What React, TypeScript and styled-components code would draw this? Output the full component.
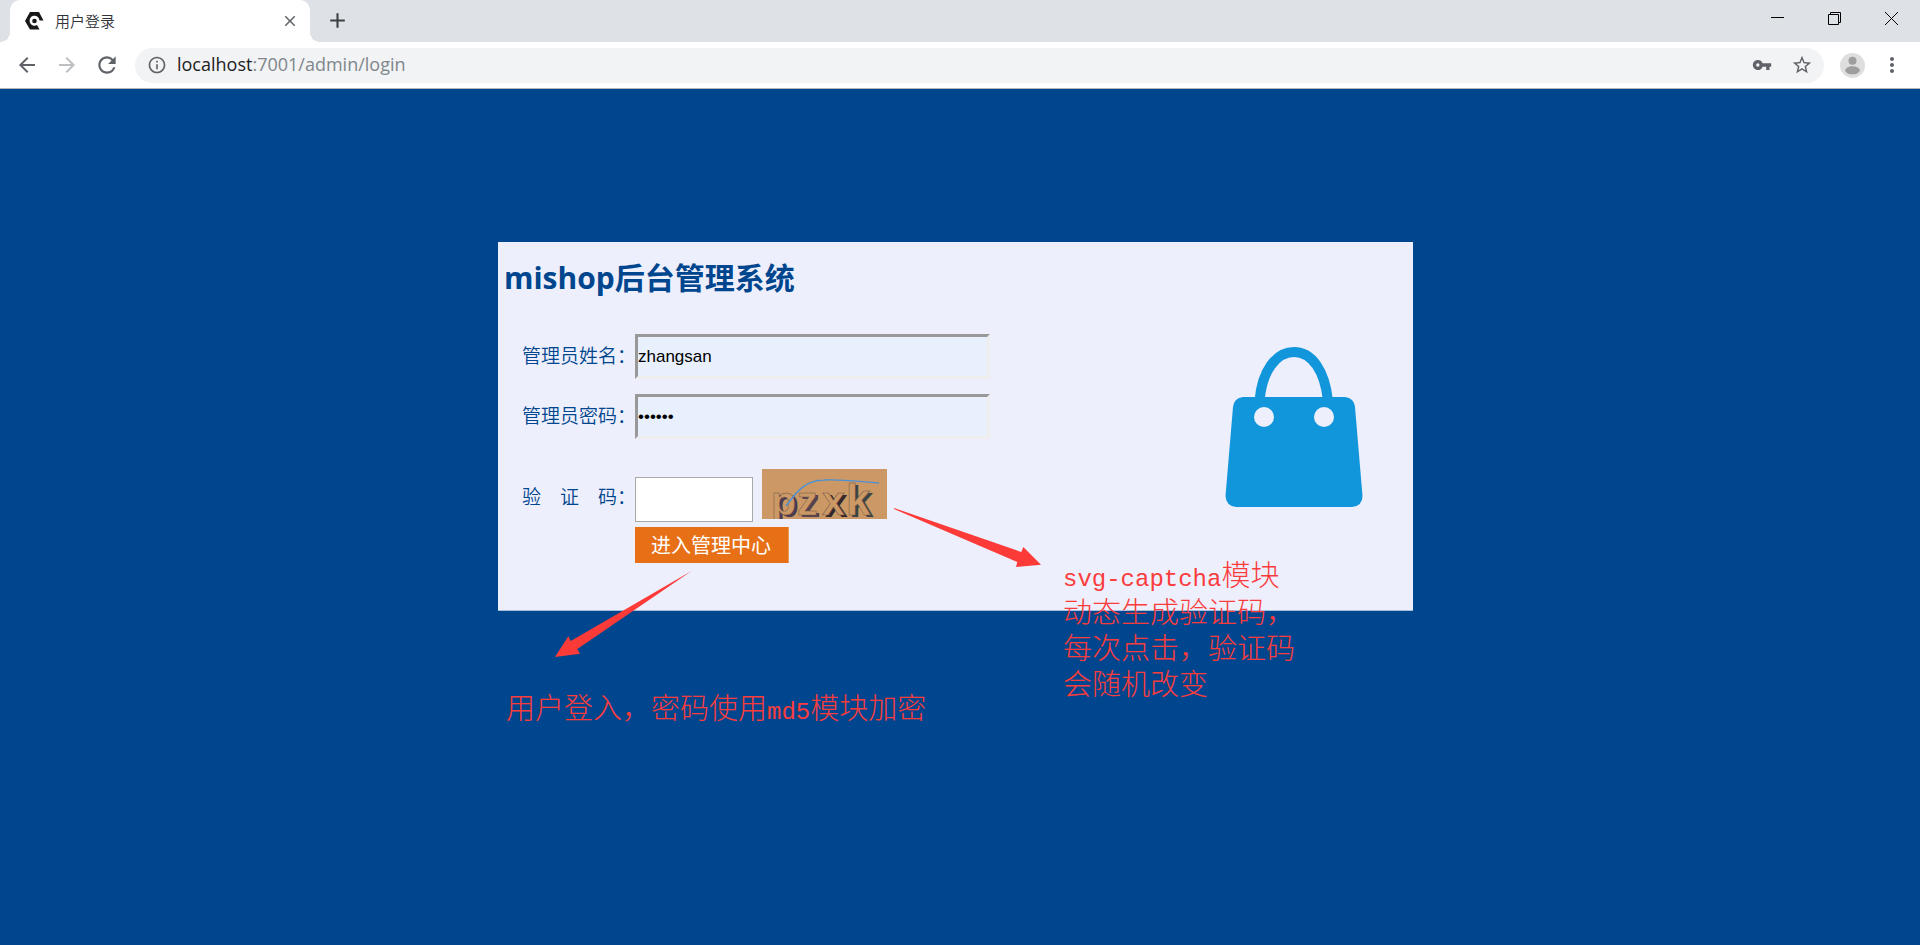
import React, { useState } from "react";
import styled, { createGlobalStyle } from "styled-components";
import {
  MdAdd,
  MdArrowBack,
  MdArrowForward,
  MdClose,
  MdInfoOutline,
  MdMoreVert,
  MdRefresh,
  MdStarBorder,
  MdVpnKey,
} from "react-icons/md";

const GlobalStyle = createGlobalStyle`
  * { box-sizing: border-box; }
  body {
    margin: 0;
    font-family: "Open Sans", "Noto Sans CJK SC", sans-serif;
  }
  button { font-family: inherit; }
`;

const Shell = styled.div`
  display: flex;
  flex-direction: column;
  min-height: 100vh;
`;

/* ---------- browser frame ---------- */

const TabStrip = styled.header`
  display: flex;
  height: 42px;
  padding-left: 10px;
  background: #dee1e6;
`;

const Tab = styled.div`
  position: relative;
  display: flex;
  align-items: center;
  width: 300px;
  padding: 0 11px 0 15px;
  border-radius: 10px 10px 0 0;
  background: #fff;

  &::before,
  &::after {
    content: "";
    position: absolute;
    bottom: 0;
    width: 10px;
    height: 10px;
  }
  &::before {
    left: -10px;
    background: radial-gradient(circle at 0 0, #dee1e6 10px, #fff 10px);
  }
  &::after {
    right: -10px;
    background: radial-gradient(circle at 100% 0, #dee1e6 10px, #fff 10px);
  }
`;

const TabTitle = styled.span`
  flex: 1;
  margin-left: 11px;
  color: #303438;
  font-family: "Noto Sans CJK SC", sans-serif;
  font-size: 15px;
  font-weight: 350;
  line-height: 20px;
`;

const IconButton = styled.button<{ $size?: number; $tone?: string }>`
  display: flex;
  align-items: center;
  justify-content: center;
  flex: none;
  width: ${(p) => p.$size ?? 40}px;
  height: ${(p) => p.$size ?? 40}px;
  padding: 0;
  border: 0;
  background: none;
  color: ${(p) => p.$tone ?? "#5f6368"};
`;

const NewTab = styled(IconButton)`
  margin-left: 7px;
`;

const WindowControls = styled.div`
  display: flex;
  margin-left: auto;
`;

const WindowButton = styled(IconButton)`
  width: 57px;
  height: 37px;
`;

const Toolbar = styled.nav`
  display: flex;
  align-items: center;
  height: 47px;
  padding: 0 8px 0 7px;
  border-bottom: 1px solid #b6b4b6;
  background: #fff;
`;

const AddressBar = styled.div`
  display: flex;
  flex: 1;
  align-items: center;
  height: 35px;
  margin: 0 8px;
  padding: 0 2px 0 12px;
  border-radius: 18px;
  background: #f1f3f4;
  color: #5f6368;
`;

const Address = styled.a`
  flex: 1;
  margin-left: 10px;
  padding-bottom: 2px;
  color: #80868b;
  font-size: 18px;
  line-height: 24px;
  text-decoration: none;
`;

const Host = styled.span`
  color: #202124;
`;

/* ---------- login page ---------- */

const Page = styled.main`
  flex: 1;
  padding: 153px 9px 40px 0;
  background: #00468e;
`;

const Card = styled.section`
  position: relative;
  display: flex;
  justify-content: space-between;
  width: 100%;
  max-width: 915px;
  margin: 0 auto;
  padding: 14px 50px 47px 6px;
  border-bottom: 1px solid #a8bcdb;
  background: #edeffc;
`;

const Title = styled.h1`
  margin: 0 0 34px;
  color: #00468e;
  font-size: 30px;
  font-weight: 700;
  line-height: 44px;
`;

const LoginForm = styled.form`
  display: flex;
  flex-direction: column;
  gap: 15px;
  padding-left: 18px;
`;

const Row = styled.div`
  display: flex;
  align-items: center;
`;

const Label = styled.label`
  flex: none;
  width: 113px;
  padding-bottom: 4px;
  color: #00468e;
  font-family: "Noto Sans CJK SC", sans-serif;
  font-size: 19px;
  font-weight: 350;
  line-height: 28px;
  white-space: nowrap;
`;

const CodeRow = styled(Row)`
  margin-top: 23px;

  ${Label} {
    padding-bottom: 8px;
  }
`;

const Field = styled.input`
  width: 355px;
  height: 45px;
  padding: 0;
  border: 3px solid;
  border-color: #999 #eee #eee #999;
  background: #e8f0fe;
  color: #000;
  font-family: "Liberation Sans", Arial, sans-serif;
  font-size: 17px;
  outline: none;
`;

const CodeField = styled(Field)`
  width: 118px;
  border: 1px solid #a9a9a9;
  background: #fff;
`;

const CaptchaButton = styled.button`
  height: 50px;
  margin: -8px 0 3px 9px;
  padding: 0;
  border: 0;
  background: #cc9966;
`;

const Submit = styled.button`
  width: 154px;
  height: 36px;
  margin: -10px 0 0 113px;
  padding: 0 1px 0 0;
  border: 0;
  border-right: 1px solid #ee9a55;
  background: #e77017;
  color: #fff;
  font-family: "Noto Sans CJK SC", sans-serif;
  font-size: 20px;
  line-height: 36px;
`;

const Bag = styled.svg`
  flex: none;
  width: 138px;
  height: 160px;
  margin-top: 91px;
`;

/* Red remarks pinned over the card */
const Arrow = styled.svg<{ $x: number; $y: number }>`
  position: absolute;
  left: ${(p) => p.$x}px;
  top: ${(p) => p.$y}px;
  fill: #fc3a38;
  pointer-events: none;
`;

const Note = styled.p<{ $x: number; $y: number }>`
  position: absolute;
  left: ${(p) => p.$x}px;
  top: ${(p) => p.$y}px;
  margin: 0;
  color: #fa3c3c;
  font-family: "Noto Sans CJK SC", sans-serif;
  font-size: 29px;
  font-weight: 300;
  line-height: 36px;
  white-space: nowrap;
`;

const Mono = styled.span`
  font-family: "Liberation Mono", monospace;
  font-size: 24px;
  font-weight: 400;
  line-height: 24px;
`;

const captchaLetters = [
  { char: "p", x: 9, y: 46, size: 41, shade: "#4a3a50" },
  { char: "z", x: 35, y: 46, size: 41, shade: "#54424f" },
  { char: "x", x: 60, y: 46, size: 41, shade: "#33272b" },
  { char: "k", x: 84, y: 46, size: 44, shade: "#3b4345" },
];

function Favicon() {
  return (
    <svg width="19" height="18" viewBox="0 0 19 18" aria-hidden="true">
      <path
        d="M5 0H14L18.500 8.500H14.500A5 5 0 1 0 12 13L14.500 17.500H5L0 9Z"
        fill="#17181a"
      />
      <circle cx="9.500" cy="9" r="2.300" fill="#17181a" />
    </svg>
  );
}

function Avatar() {
  return (
    <svg width="25" height="25" viewBox="0 0 25 25" aria-hidden="true">
      <circle cx="12.500" cy="12.500" r="12.500" fill="#dedede" />
      <circle cx="12.500" cy="7.700" r="4" fill="#9e9e9e" />
      <ellipse cx="12.500" cy="17.300" rx="7.300" ry="4" fill="#9e9e9e" />
    </svg>
  );
}

function Captcha() {
  return (
    <svg width="125" height="50" viewBox="0 0 125 50" fontFamily="Liberation Sans, sans-serif" fontWeight="700">
      {captchaLetters.map((l) => (
        <g key={l.char} fontSize={l.size}>
          <text x={l.x + 3} y={l.y + 2} fill={l.shade}>{l.char}</text>
          <text x={l.x} y={l.y} fill="#cc9966" stroke="#6f5445" strokeWidth="0.500">{l.char}</text>
        </g>
      ))}
      <path d="M24 37C35 22 44 11 62 11C80 10 100 13 117 14" fill="none" stroke="#4a90d4" strokeWidth="1.400" />
    </svg>
  );
}

export default function App() {
  const [name, setName] = useState("zhangsan");
  const [password, setPassword] = useState("123456");
  const [code, setCode] = useState("");

  return (
    <Shell>
      <GlobalStyle />
      <TabStrip>
        <Tab>
          <Favicon />
          <TabTitle>用户登录</TabTitle>
          <IconButton $size={18} aria-label="关闭标签页"><MdClose size={18} /></IconButton>
        </Tab>
        <NewTab aria-label="新标签页" $tone="#3c4043"><MdAdd size={25} /></NewTab>
        <WindowControls>
          <WindowButton aria-label="最小化">
            <svg width="13" height="13"><path d="M0 5.500H13" stroke="#000" /></svg>
          </WindowButton>
          <WindowButton aria-label="还原">
            <svg width="13" height="13" fill="none" stroke="#000">
              <path d="M0.500 2.500H10.500V12.500H0.500ZM2.500 2.500V0.500H12.500V10.500H10.500" />
            </svg>
          </WindowButton>
          <WindowButton aria-label="关闭">
            <svg width="13" height="13"><path d="M0 0L13 13M13 0L0 13" stroke="#000" /></svg>
          </WindowButton>
        </WindowControls>
      </TabStrip>
      <Toolbar>
        <IconButton aria-label="后退"><MdArrowBack size={24} /></IconButton>
        <IconButton aria-label="前进" $tone="#bdc0c3"><MdArrowForward size={24} /></IconButton>
        <IconButton aria-label="重新加载"><MdRefresh size={26} /></IconButton>
        <AddressBar>
          <MdInfoOutline size={20} />
          <Address href="#"><Host>localhost</Host>:7001/admin/login</Address>
          <IconButton aria-label="密码"><MdVpnKey size={20} /></IconButton>
          <IconButton aria-label="收藏"><MdStarBorder size={22} /></IconButton>
        </AddressBar>
        <IconButton aria-label="用户"><Avatar /></IconButton>
        <IconButton aria-label="菜单"><MdMoreVert size={24} /></IconButton>
      </Toolbar>
      <Page>
        <Card>
          <div>
            <Title>mishop后台管理系统</Title>
            <LoginForm onSubmit={(e) => e.preventDefault()}>
              <Row>
                <Label htmlFor="name">管理员姓名：</Label>
                <Field id="name" value={name} onChange={(e) => setName(e.target.value)} />
              </Row>
              <Row>
                <Label htmlFor="password">管理员密码：</Label>
                <Field id="password" type="password" value={password} onChange={(e) => setPassword(e.target.value)} />
              </Row>
              <CodeRow>
                <Label htmlFor="code">验　证　码：</Label>
                <CodeField id="code" value={code} onChange={(e) => setCode(e.target.value)} />
                <CaptchaButton type="button" aria-label="验证码"><Captcha /></CaptchaButton>
              </CodeRow>
              <Submit type="submit">进入管理中心</Submit>
            </LoginForm>
          </div>
          <Bag viewBox="0 0 138 160" aria-hidden="true">
            <path d="M34.500 54C37 24 51 5 69 5C87 5 100 24 103 54" fill="none" stroke="#1296db" strokeWidth="10" />
            <path
              d="M18 50H120Q129 51 130 60L137.500 149Q137.500 159 127 160H11Q1 159 0.500 149L8 60Q9 51 18 50Z"
              fill="#1296db"
            />
            <circle cx="39" cy="70" r="10" fill="#edeffc" />
            <circle cx="99" cy="70" r="10" fill="#edeffc" />
          </Bag>
          <Arrow $x={396} $y={266} width="148" height="60" viewBox="0 0 148 60">
            <path d="M0 0L127.300 44L129.300 39L147 56.700L122 59L123.300 54L0 1Z" />
          </Arrow>
          <Arrow $x={57} $y={329} width="137" height="87" viewBox="0 0 137 87">
            <path d="M136.500 0L15.700 70L13.300 65.300L0 86L25 82.700L22.300 78Z" />
          </Arrow>
          <Note $x={565} $y={313}>
            <Mono>svg-captcha</Mono>模块<br />
            动态生成验证码，<br />
            每次点击，验证码<br />
            会随机改变
          </Note>
          <Note $x={8} $y={446}>
            用户登入，密码使用<Mono>md5</Mono>模块加密
          </Note>
        </Card>
      </Page>
    </Shell>
  );
}
